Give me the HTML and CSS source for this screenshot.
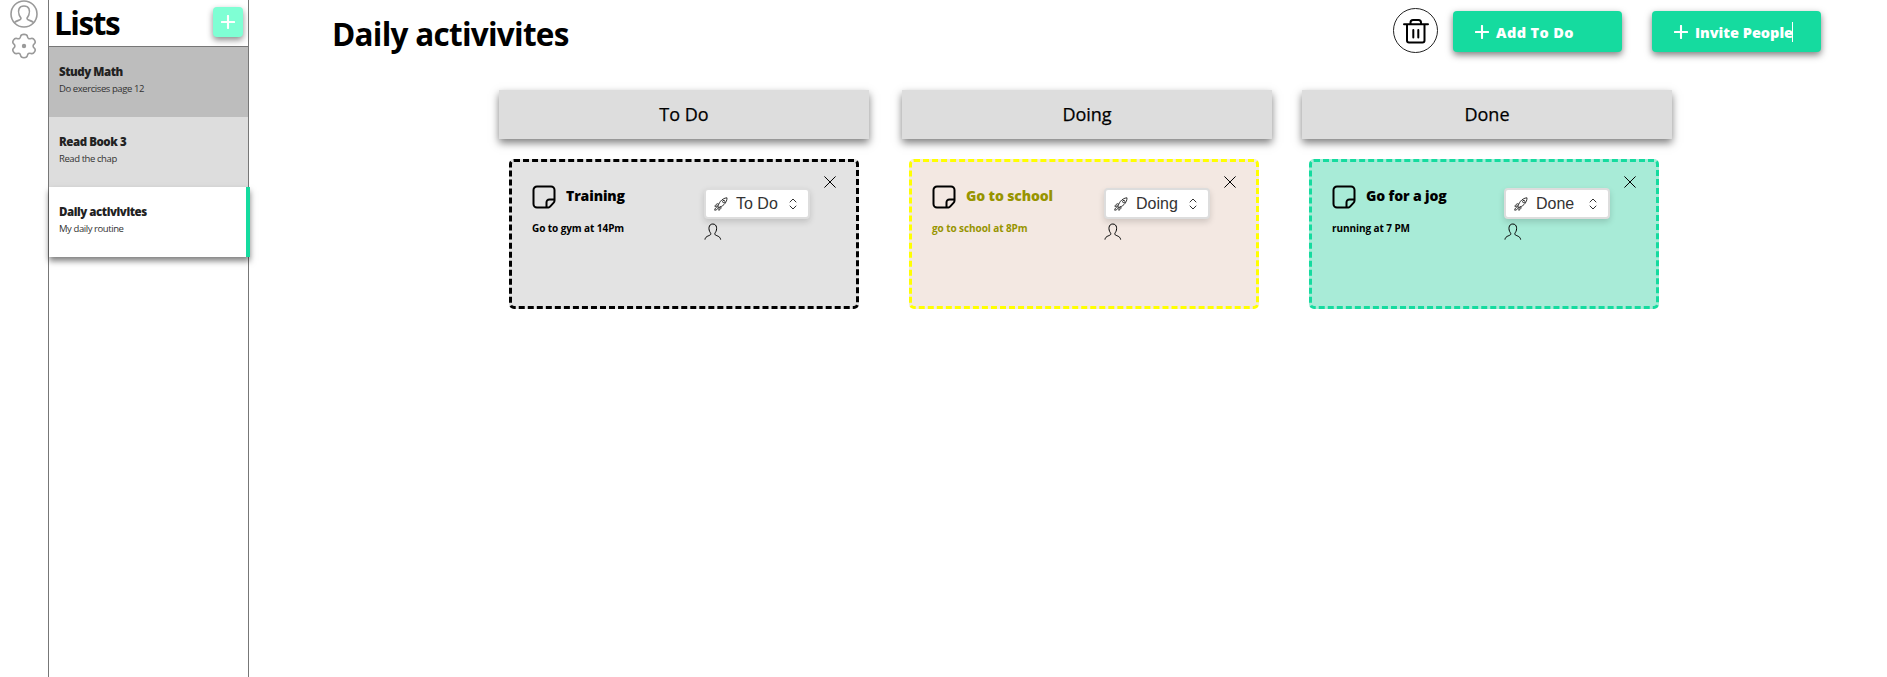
FILE: index.html
```
<!DOCTYPE html>
<html lang="en">
<head>
<meta charset="utf-8">
<title>Daily activivites</title>
<link rel="stylesheet" href="styles.css">
</head>
<body>
<svg class="defs" width="0" height="0">
  <symbol id="user" viewBox="0 0 18 17"><path d="M1 16.2C1.4 12.6 6.2 13 6.8 11.2C6.9 10.6 6.7 10.2 6.3 9.6C4.2 6.8 4.3 1 8.8 1S13.4 6.8 11.3 9.6C10.9 10.2 10.7 10.6 10.8 11.2C11.4 13 16.2 12.6 16.6 16.2"/></symbol>
  <symbol id="note" viewBox="0 0 24 24"><path d="M16.5 22.5H5a3.5 3.5 0 0 1-3.500-3.500V5A3.500 3.500 0 0 1 5 1.500H19A3.500 3.500 0 0 1 22.500 5v10.500c0 1-.3 1.700-1 2.400l-3 3.300c-.6.7-1.200 1.300-2 1.300zM14.500 22v-4.500c0-1.700 1-3 3-3H22.200"/></symbol>
  <symbol id="close" viewBox="0 0 12 12"><path d="M.7.7l10.600 10.600M11.300.7L.7 11.300"/></symbol>
  <symbol id="rocket" viewBox="0 0 14 14"><path d="M4 9.700C4.300 6.500 7.500 1.200 13 .8 13.200 6 8 10 4.900 10.400zM4.500 7.200l-1.300-.5C1.700 7.700 1 8.600.9 9.400l2.700-.5M6.700 9.600l.4 1.400c-.7 1.300-1.300 1.800-2.300 2.300l.4-3M3.200 10C1.500 10.400 1 11.500.7 13.200c1.600 0 2.800-.6 3.300-2.200M9.700 3.300a1.200 1.200 0 1 0 .1 2.400 1.200 1.200 0 0 0-.1-2.400"/></symbol>
  <symbol id="updown" viewBox="0 0 8 12"><path d="M1 4l3-3 3 3M1 8l3 3 3-3"/></symbol>
  <symbol id="plus" viewBox="0 0 14 14"><path d="M7 .9v12.200M.9 7h12.200"/></symbol>
</svg>
<div class="app">
  <nav class="rail">
    <svg class="rail-user" viewBox="0 0 28 28"><circle cx="14" cy="14" r="13"/><path d="M4.500 22.500C7 20 11 20.500 11 18.500C11 17.500 9.800 16.800 9.200 15C7.500 10 9 6 14 6s6.500 4 4.800 9C18.200 16.800 17 17.500 17 18.500C17 20.500 21 20 23.500 22.500"/></svg>
    <svg class="rail-gear" viewBox="0 0 24 26"><path d="M8.600 3.500C9 .6 15 .6 15.400 3.500C15.700 5.500 17 6.200 19 5.500C21.800 4.500 24.500 9 22.300 10.800C20.700 12.200 20.700 13.800 22.300 15.200C24.500 17 21.800 21.500 19 20.500C17 19.800 15.700 20.500 15.400 22.500C15 25.400 9 25.400 8.600 22.500C8.300 20.500 7 19.800 5 20.500C2.200 21.500-.5 17 1.700 15.200C3.300 13.800 3.300 12.200 1.700 10.800C-.5 9 2.200 4.500 5 5.500C7 6.200 8.300 5.500 8.600 3.500z"/><circle class="dot" cx="12" cy="13" r="2.200"/></svg>
  </nav>
  <aside class="lists">
    <header class="lists-head"><h1>Lists</h1><button class="add"><svg><use href="#plus"/></svg></button></header>
    <div class="item first"><b>Study Math</b><span>Do exercises page 12</span></div>
    <div class="item"><b>Read Book 3</b><span>Read the chap</span></div>
    <div class="item active"><b>Daily activivites</b><span>My daily routine</span></div>
  </aside>
  <main class="main">
    <header class="top">
      <h1>Daily activivites</h1>
      <button class="trash"><svg viewBox="0 0 26 26"><path d="M1 6.300H25M4 6.300V22.500q0 2 2 2H19.500q2 0 2-2V6.300M7.500 6V4.500Q7.500 2 10 2H15.500Q18 2 18 4.500V6M10.300 12v7.500M15.300 12v7.500"/></svg></button>
      <button class="btn create"><svg><use href="#plus"/></svg><span>Add To Do</span></button>
      <button class="btn invite"><svg><use href="#plus"/></svg><span>Invite People</span><i class="caret"></i></button>
    </header>
    <div class="heads">
      <h2>To Do</h2><h2>Doing</h2><h2>Done</h2>
    </div>
    <div class="cards">
      <article class="card todo">
        <div class="info"><div class="name"><svg><use href="#note"/></svg><h3>Training</h3></div><p>Go to gym at 14Pm</p></div>
        <div class="state"><div class="select"><svg class="rocket"><use href="#rocket"/></svg><span>To Do</span><svg class="updown"><use href="#updown"/></svg></div><svg class="user"><use href="#user"/></svg></div>
        <svg class="close"><use href="#close"/></svg>
      </article>
      <article class="card doing">
        <div class="info"><div class="name"><svg><use href="#note"/></svg><h3>Go to school</h3></div><p>go to school at 8Pm</p></div>
        <div class="state"><div class="select"><svg class="rocket"><use href="#rocket"/></svg><span>Doing</span><svg class="updown"><use href="#updown"/></svg></div><svg class="user"><use href="#user"/></svg></div>
        <svg class="close"><use href="#close"/></svg>
      </article>
      <article class="card done">
        <div class="info"><div class="name"><svg><use href="#note"/></svg><h3>Go for a jog</h3></div><p>running at 7 PM</p></div>
        <div class="state"><div class="select"><svg class="rocket"><use href="#rocket"/></svg><span>Done</span><svg class="updown"><use href="#updown"/></svg></div><svg class="user"><use href="#user"/></svg></div>
        <svg class="close"><use href="#close"/></svg>
      </article>
    </div>
  </main>
</div>
</body>
</html>
```
FILE: styles.css
```
* { box-sizing: border-box; }
body { margin: 0; background: #fff; color: #000; font-family: "Open Sans", "Noto Sans", sans-serif; overflow: hidden; }
h1, h2, h3, p { margin: 0; white-space: nowrap; }
button { border: 0; padding: 0; font-family: inherit; }
svg { display: block; fill: none; stroke: #000; stroke-linecap: round; stroke-linejoin: round; flex: none; }
.defs { position: absolute; }
.app { display: flex; height: 677px; }
.rail { width: 48px; flex: none; }
.rail svg { stroke: #9a9a9a; stroke-width: 1.600; }
.rail-user { width: 28px; height: 28px; margin-left: 10px; }
.rail-gear { width: 24px; height: 26px; margin: 5px 0 0 12px; }
.rail .dot { fill: #9a9a9a; stroke: none; }
.lists { width: 201px; flex: none; border-left: 1px solid #777; border-right: 1px solid #777; }
.lists-head { height: 47px; border-bottom: 1px solid #777; display: flex; justify-content: space-between; align-items: flex-start; padding: 7px 5px 0 5px; }
.lists-head h1 { font-size: 31.500px; line-height: 32px; font-weight: 700; letter-spacing: -1.450px; }
.add { width: 30px; height: 30px; border-radius: 4px; background: #7fffd4; box-shadow: 0 3px 6px rgba(0,0,0,.45); display: grid; place-items: center; }
.add svg, .btn svg { width: 14px; height: 14px; stroke: #fff; stroke-width: 2.100; }
.item { height: 70px; background: #ddd; display: flex; flex-direction: column; padding: 16px 0 0 10px; color: #222; white-space: nowrap; }
.item b { font-size: 11.500px; line-height: 17px; font-weight: 800; letter-spacing: -.45px; }
.item span { font-size: 9.500px; line-height: 17px; color: #333; letter-spacing: -.42px; }
.item.first { background: #bdbdbd; }
.item.active { background: #fff; width: 201px; border-right: 4px solid #15db9f; box-shadow: 0 4px 6px rgba(0,0,0,.5); position: relative; }
.main { flex: 1; min-width: 0; }
.top { display: flex; height: 90px; padding: 8px 66px 0 83px; align-items: flex-start; }
.top h1 { font-size: 31.500px; line-height: 52px; font-weight: 700; margin-right: auto; letter-spacing: -.74px; }
.trash { width: 45px; height: 45px; border: 1px solid #222; border-radius: 50%; background: #fff; display: grid; place-items: center; margin: 0 15px 0 0; }
.trash svg { width: 26px; height: 26px; stroke-width: 2; }
.btn { width: 169px; height: 41px; margin-top: 3px; border-radius: 4px; background: #15db9f; color: #fff; box-shadow: 0 3px 7px rgba(0,0,0,.5); display: flex; align-items: center; padding-left: 22px; font-size: 14.500px; font-weight: 800; white-space: nowrap; }
.btn svg { margin-right: 7px; }
.btn span { padding-top: 1px; }
.create span { letter-spacing: .4px; }
.invite { margin-left: 30px; }
.caret { width: 1px; height: 20px; background: #fff; margin-left: -1px; }
.heads { display: flex; gap: 33px; padding-left: 250px; }
.heads h2 { width: 370px; height: 49px; background: #ddd; font-size: 18px; line-height: 48px; font-weight: 500; -webkit-text-stroke: .25px #000; text-align: center; box-shadow: 0 4px 8px rgba(0,0,0,.5); }
.heads h2:last-child { margin-left: -3px; }
.cards { display: flex; gap: 50px; padding: 20px 0 0 260px; }
.card { width: 350px; height: 150px; border: 3px dashed #000; border-radius: 5px; display: grid; grid-template-columns: 172px 1fr 12px; padding: 0 20px; background: #e3e3e3; }
.info { padding-top: 23px; }
.name { display: flex; align-items: flex-start; gap: 10px; height: 24px; }
.name svg { width: 24px; height: 24px; stroke-width: 2; }
.card h3 { font-size: 14px; line-height: 22px; font-weight: 800; letter-spacing: -.12px; }
.card p { font-size: 10px; line-height: 16px; font-weight: 700; margin-top: 11px; letter-spacing: -.08px; }
.state { padding-top: 26px; }
.select { width: 106px; height: 31px; border: 2px solid #ddd; border-radius: 4px; background: #fff; box-shadow: 0 3px 6px rgba(0,0,0,.15); display: flex; align-items: center; color: #333; font: 16px/27px "Liberation Sans", Arial, sans-serif; padding: 0 11px 0 8px; }
.select svg { stroke: #333; stroke-width: 1; }
.rocket { width: 14px; height: 14px; margin-right: 8px; }
.updown { width: 8px; height: 12px; margin-left: auto; }
.user { width: 18px; height: 17px; margin-top: 4px; }
.close { width: 12px; height: 12px; margin-top: 14px; }
.doing { background: #f3e8e2; border-color: #ff0; color: #979400; }
.done { background: #a8ebd7; border-color: #15db9f; }
```
